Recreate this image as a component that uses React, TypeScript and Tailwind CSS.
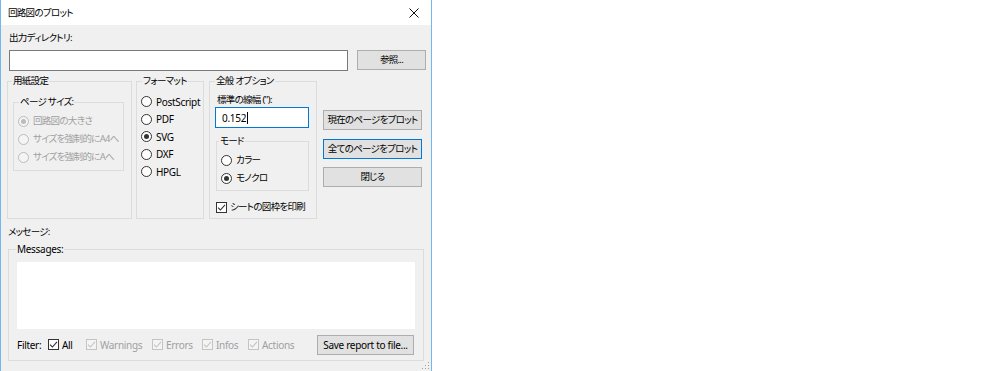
import React from 'react';

const font = "font-['Noto_Sans','Noto_Sans_CJK_JP',sans-serif] [font-feature-settings:'palt']";
const jpText = 'text-[9.5px] tracking-[-0.7px]';
const enText = 'text-[10px] tracking-[-0.3px]';

// pick the text sizing by script: the reference's UI font is narrower than ours
const t = (s: string) => (/[^\x00-\x7f]/.test(s) ? jpText : enText);

interface GroupProps {
  label: string;
  legendClass: string;
  className: string;
  children?: React.ReactNode;
}

const Group: React.FC<GroupProps> = ({ label, legendClass, className, children }) => (
  <fieldset className={`border border-[#dcdcdc] min-w-0 ${className}`}>
    <legend className={`px-[1px] leading-[12px] ${t(label)} ${legendClass}`}>{label}</legend>
    {children}
  </fieldset>
);

const Radio: React.FC<{ label: string; checked?: boolean; disabled?: boolean; className?: string }> = ({
  label,
  checked,
  disabled,
  className = 'h-[18px]',
}) => (
  <div className={`flex items-center gap-[4px] ${className}`}>
    <span
      className={`w-[11px] h-[11px] rounded-full border flex items-center justify-center shrink-0 ${
        disabled ? 'border-[#bcbcbc] bg-[#f4f4f4]' : 'border-[#333333] bg-white'
      }`}
    >
      {checked && <span className={`w-[5px] h-[5px] rounded-full ${disabled ? 'bg-[#bcbcbc]' : 'bg-[#333333]'}`} />}
    </span>
    <span className={`leading-[12px] whitespace-nowrap ${t(label)} ${disabled ? 'text-[#a0a0a0]' : 'text-black'}`}>
      {label}
    </span>
  </div>
);

const Check: React.FC<{ label: string; disabled?: boolean; className?: string }> = ({ label, disabled, className = '' }) => (
  <div className={`flex items-center gap-[3px] ${className}`}>
    <span
      className={`w-[11px] h-[11px] border flex items-center justify-center shrink-0 ${
        disabled ? 'border-[#c4c4c4] bg-[#f4f4f4]' : 'border-[#333333] bg-white'
      }`}
    >
      <svg width="9" height="9" viewBox="0 0 9 9">
        <path d="M1 4.6 L3.4 7 L8 1.8" fill="none" stroke={disabled ? '#c4c4c4' : '#333333'} strokeWidth="1.1" />
      </svg>
    </span>
    <span className={`leading-[12px] whitespace-nowrap ${t(label)} ${disabled ? 'text-[#a0a0a0]' : 'text-black'}`}>
      {label}
    </span>
  </div>
);

const Button: React.FC<{ label: string; primary?: boolean; className?: string }> = ({ label, primary, className = '' }) => (
  <div
    className={`h-[20px] flex items-center justify-center bg-[#e1e1e1] border leading-[12px] whitespace-nowrap ${t(label)} ${
      primary ? 'border-[#0078d7]' : 'border-[#adadad]'
    } ${className}`}
  >
    {label}
  </div>
);

export default function App() {
  return (
    <div className={`w-[1000px] h-[371px] bg-white overflow-hidden text-[10px] text-black ${font}`}>
      <div className="relative w-[432px] h-[371px] border-x border-[#74b7ec] bg-[#f0f0f0] flex flex-col">
        {/* title bar */}
        <div className="h-[25px] bg-white flex items-center justify-between pl-[7px] pr-[12px] shrink-0">
          <span className={`leading-[12px] ${jpText}`}>回路図のプロット</span>
          <svg width="10" height="10" viewBox="0 0 10 10">
            <path d="M0.5 0.5 L9.5 9.5 M9.5 0.5 L0.5 9.5" stroke="#111" strokeWidth="1" />
          </svg>
        </div>

        <div className={`mt-[7px] ml-[8px] leading-[12px] ${jpText}`}>出力ディレクトリ:</div>

        <div className="mt-[6px] flex items-start">
          <div className="ml-[8px] w-[339px] h-[21px] bg-white border border-[#7a7a7a]" />
          <Button label="参照..." className="ml-[9px] w-[69px]" />
        </div>

        {/* option groups */}
        <div className="mt-[4px] flex items-start">
          <Group label="用紙設定" legendClass="ml-[4px]" className="ml-[6px] w-[125px] h-[144px]">
            <Group label="ページ サイズ:" legendClass="ml-[5px]" className="mt-[9px] ml-[5px] w-[111px] h-[75px]">
              <div className="mt-[4px] pl-[4px] flex flex-col">
                <Radio label="回路図の大きさ" checked disabled />
                <Radio label="サイズを強制的にA4へ" disabled />
                <Radio label="サイズを強制的にAへ" disabled />
              </div>
            </Group>
          </Group>

          <Group label="フォーマット" legendClass="ml-[5px]" className="ml-[4px] w-[68px] h-[144px]">
            <div className="mt-[6px] pl-[4px] flex flex-col">
              <Radio label="PostScript" className="h-[17.5px]" />
              <Radio label="PDF" className="h-[17.5px]" />
              <Radio label="SVG" checked className="h-[17.5px]" />
              <Radio label="DXF" className="h-[17.5px]" />
              <Radio label="HPGL" className="h-[17.5px]" />
            </div>
          </Group>

          <Group label="全般 オプション" legendClass="ml-[5px]" className="ml-[5px] w-[108px] h-[144px]">
            <div className={`mt-[7px] pl-[7px] leading-[12px] ${jpText}`}>標準の線幅 ("):</div>
            <div className="mt-[1px] ml-[5px] w-[94px] h-[21px] bg-white border border-[#0078d7] flex items-center pl-[6px]">
              <span className={`leading-[12px] ${enText}`}>0.152</span>
              <span className="w-px h-[12px] bg-black ml-[1px]" />
            </div>
            <Group label="モード" legendClass="ml-[2px]" className="mt-[7px] ml-[6px] w-[93px] h-[56px]">
              <div className="mt-[4px] pl-[4px] flex flex-col">
                <Radio label="カラー" />
                <Radio label="モノクロ" checked />
              </div>
            </Group>
            <Check label="シートの図枠を印刷" className="mt-[8px] ml-[6px] h-[16px]" />
          </Group>

          <div className="ml-[6px] mt-[35px] w-[99px] flex flex-col gap-[8.5px]">
            <Button label="現在のページをプロット" />
            <Button label="全てのページをプロット" primary />
            <Button label="閉じる" />
          </div>
        </div>

        <div className={`mt-[7px] ml-[7px] leading-[12px] ${jpText}`}>メッセージ:</div>

        <Group label="Messages:" legendClass="ml-[7px]" className="mt-[5px] ml-[7px] w-[416px] h-[118px]">
          <div className="mt-[7px] ml-[8px] w-[398px] h-[67px] bg-white" />
          <div className="mt-[5px] ml-[8px] h-[21px] flex items-center">
            <span className={`w-[31px] leading-[12px] ${enText}`}>Filter:</span>
            <Check label="All" className="w-[38px]" />
            <Check label="Warnings" disabled className="w-[66px]" />
            <Check label="Errors" disabled className="w-[50px]" />
            <Check label="Infos" disabled className="w-[46px]" />
            <Check label="Actions" disabled className="w-[69px]" />
            <Button label="Save report to file..." className="w-[97px]" />
          </div>
        </Group>

        {/* size grip */}
        <svg className="absolute right-[1px] bottom-[1px]" width="9" height="9" viewBox="0 0 9 9">
          <rect x="7" y="1" width="1" height="1" fill="#a0a0a0" />
          <rect x="4" y="4" width="1" height="1" fill="#a0a0a0" />
          <rect x="7" y="4" width="1" height="1" fill="#a0a0a0" />
          <rect x="1" y="7" width="1" height="1" fill="#a0a0a0" />
          <rect x="4" y="7" width="1" height="1" fill="#a0a0a0" />
          <rect x="7" y="7" width="1" height="1" fill="#a0a0a0" />
        </svg>
      </div>
    </div>
  );
}
